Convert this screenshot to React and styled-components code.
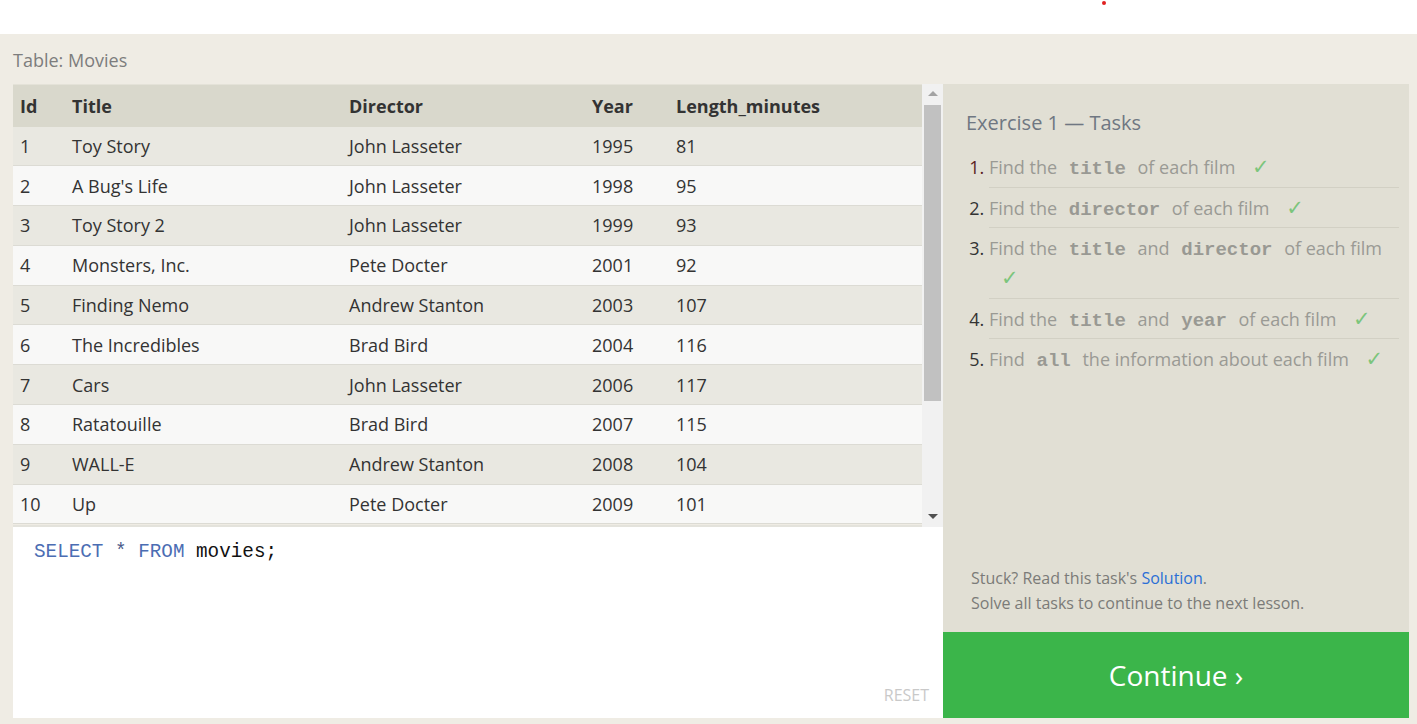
import React from 'react'
import styled, { createGlobalStyle } from 'styled-components'

const GlobalStyle = createGlobalStyle`
  body {
    margin: 0;
    background: #ffffff;
    font-family: "Open Sans", "Noto Sans", sans-serif;
  }
`;

const TopBar = styled.div`
  height: 34px;
  display: flex;
  padding-left: 1102px;
  background: #ffffff;
`;

const RedDot = styled.span`
  width: 4px;
  height: 4px;
  margin-top: 1px;
  border-radius: 50%;
  background: #e02020;
`;

const Main = styled.div`
  background: #efece4;
  padding: 14px 8px 6px 13px;
`;

const Caption = styled.div`
  font-size: 18px;
  line-height: 24px;
  color: #7d7d7d;
  margin-bottom: 12px;
`;

const Workspace = styled.div`
  display: flex;
  height: 634px;
`;

const LeftColumn = styled.div`
  width: 930px;
  display: flex;
  flex-direction: column;
`;

const RightColumn = styled.div`
  width: 466px;
  display: flex;
  flex-direction: column;
`;

const TableFrame = styled.div`
  height: 443px;
  display: flex;
`;

const TableScroll = styled.div`
  width: 909px;
  overflow: hidden;
  border-bottom: 2px solid #e4e3dc;
`;

const Table = styled.table`
  width: 909px;
  border-collapse: collapse;
  table-layout: fixed;
  font-size: 18px;
  color: #333333;
`;

const HeadCell = styled.th`
  width: ${p => p.$w}px;
  height: 42px;
  padding: 0 0 0 7px;
  text-align: left;
  font-weight: 700;
  background: #d9d8cc;
  border-top: 1px solid #e4e2d8;
  box-sizing: border-box;
`;

const Row = styled.tr`
  background: ${p => (p.$odd ? '#e9e8e1' : '#f8f8f7')};
  border-bottom: 1px solid #dcdbd4;
`;

const Cell = styled.td`
  height: 38.8px;
  padding: 0 0 0 7px;
  white-space: nowrap;
`;

const Scrollbar = styled.div`
  width: 21px;
  background: #f1f1f1;
  display: flex;
  flex-direction: column;
  align-items: center;
  padding-top: 7px;
  box-sizing: border-box;
`;

const Arrow = styled.div`
  width: 0;
  height: 0;
  border-left: 5px solid transparent;
  border-right: 5px solid transparent;
  ${p => (p.$down
    ? 'border-top: 5px solid #505050; margin-top: auto; margin-bottom: 8px;'
    : 'border-bottom: 5px solid #a3a3a3;')}
`;

const Thumb = styled.div`
  width: 17px;
  height: 296px;
  margin-top: 9px;
  background: #c1c1c1;
`;

const Editor = styled.div`
  flex: 1;
  background: #ffffff;
  display: flex;
  flex-direction: column;
  padding: 12px 14px 12px 21px;
`;

const Code = styled.div`
  font-family: "Liberation Mono", "DejaVu Sans Mono", monospace;
  font-size: 19.3px;
  line-height: 26px;
  color: #111111;
`;

const Token = styled.span`
  color: ${p => p.$c};
`;

const Reset = styled.div`
  margin-top: auto;
  align-self: flex-end;
  font-size: 16px;
  color: #c9c9c9;
  text-transform: uppercase;
`;

const Panel = styled.div`
  flex: 1;
  background: #e1dfd4;
  display: flex;
  flex-direction: column;
  padding: 25px 10px 16px 23px;
`;

const PanelTitle = styled.div`
  font-size: 20px;
  line-height: 28px;
  color: #6f7782;
  margin-bottom: 10px;
`;

const TaskList = styled.ol`
  margin: 0;
  padding-left: 23px;
`;

const Task = styled.li`
  font-size: 18px;
  line-height: 30px;
  padding: 5px 0 4.5px;
  color: #9a9a94;
  border-bottom: 1px solid #d2d0c4;

  &:last-child {
    border-bottom: none;
  }

  &::marker {
    color: ${p => (p.$current ? '#5a2222' : '#333333')};
  }
`;

const Keyword = styled.code`
  font-family: "Liberation Mono", "DejaVu Sans Mono", monospace;
  font-weight: 700;
  font-size: 19px;
  line-height: 1;
  color: #999993;
  margin: 0 7px;
`;

const Check = styled.span`
  font-family: "DejaVu Sans", sans-serif;
  font-size: 21px;
  line-height: 1;
  color: #7cc57c;
  padding-left: 12px;
`;

const Footer = styled.div`
  margin-top: auto;
  padding-left: 5px;
  font-size: 16px;
  line-height: 25px;
  color: #7b7b78;
`;

const SolutionLink = styled.a`
  color: #2b6fd6;
  text-decoration: none;
`;

const ContinueButton = styled.button`
  height: 86px;
  border: none;
  background: #3bb54a;
  color: #ffffff;
  font-family: "Open Sans", "Noto Sans", sans-serif;
  font-size: 28px;
  cursor: pointer;
`;

const columns = [
  { name: 'Id', w: 52 },
  { name: 'Title', w: 277 },
  { name: 'Director', w: 243 },
  { name: 'Year', w: 84 },
  { name: 'Length_minutes', w: 253 },
];

const movies = [
  [1, 'Toy Story', 'John Lasseter', 1995, 81],
  [2, "A Bug's Life", 'John Lasseter', 1998, 95],
  [3, 'Toy Story 2', 'John Lasseter', 1999, 93],
  [4, 'Monsters, Inc.', 'Pete Docter', 2001, 92],
  [5, 'Finding Nemo', 'Andrew Stanton', 2003, 107],
  [6, 'The Incredibles', 'Brad Bird', 2004, 116],
  [7, 'Cars', 'John Lasseter', 2006, 117],
  [8, 'Ratatouille', 'Brad Bird', 2007, 115],
  [9, 'WALL-E', 'Andrew Stanton', 2008, 104],
  [10, 'Up', 'Pete Docter', 2009, 101],
];

const App = () => {
  return (
    <>
      <GlobalStyle />
      <TopBar><RedDot /></TopBar>
      <Main>
        <Caption>Table: Movies</Caption>
        <Workspace>
          <LeftColumn>
            <TableFrame>
              <TableScroll>
                <Table>
                  <thead>
                    <tr>
                      {columns.map(c => (
                        <HeadCell key={c.name} $w={c.w}>{c.name}</HeadCell>
                      ))}
                    </tr>
                  </thead>
                  <tbody>
                    {movies.map((m, i) => (
                      <Row key={m[0]} $odd={i % 2 === 0}>
                        {m.map((v, j) => <Cell key={j}>{v}</Cell>)}
                      </Row>
                    ))}
                  </tbody>
                </Table>
              </TableScroll>
              <Scrollbar>
                <Arrow />
                <Thumb />
                <Arrow $down />
              </Scrollbar>
            </TableFrame>
            <Editor>
              <Code>
                <Token $c="#4b6db3">SELECT</Token> <Token $c="#4a5a8a">*</Token> <Token $c="#4b6db3">FROM</Token> movies;
              </Code>
              <Reset>Reset</Reset>
            </Editor>
          </LeftColumn>
          <RightColumn>
            <Panel>
              <PanelTitle>Exercise 1 — Tasks</PanelTitle>
              <TaskList>
                <Task $current>Find the <Keyword>title</Keyword> of each film <Check>✓</Check></Task>
                <Task>Find the <Keyword>director</Keyword> of each film <Check>✓</Check></Task>
                <Task>Find the <Keyword>title</Keyword> and <Keyword>director</Keyword> of each film <Check>✓</Check></Task>
                <Task>Find the <Keyword>title</Keyword> and <Keyword>year</Keyword> of each film <Check>✓</Check></Task>
                <Task>Find <Keyword>all</Keyword> the information about each film <Check>✓</Check></Task>
              </TaskList>
              <Footer>
                <div>Stuck? Read this task's <SolutionLink href="#">Solution</SolutionLink>.</div>
                <div>Solve all tasks to continue to the next lesson.</div>
              </Footer>
            </Panel>
            <ContinueButton>Continue ›</ContinueButton>
          </RightColumn>
        </Workspace>
      </Main>
    </>
  )
}

export default App
